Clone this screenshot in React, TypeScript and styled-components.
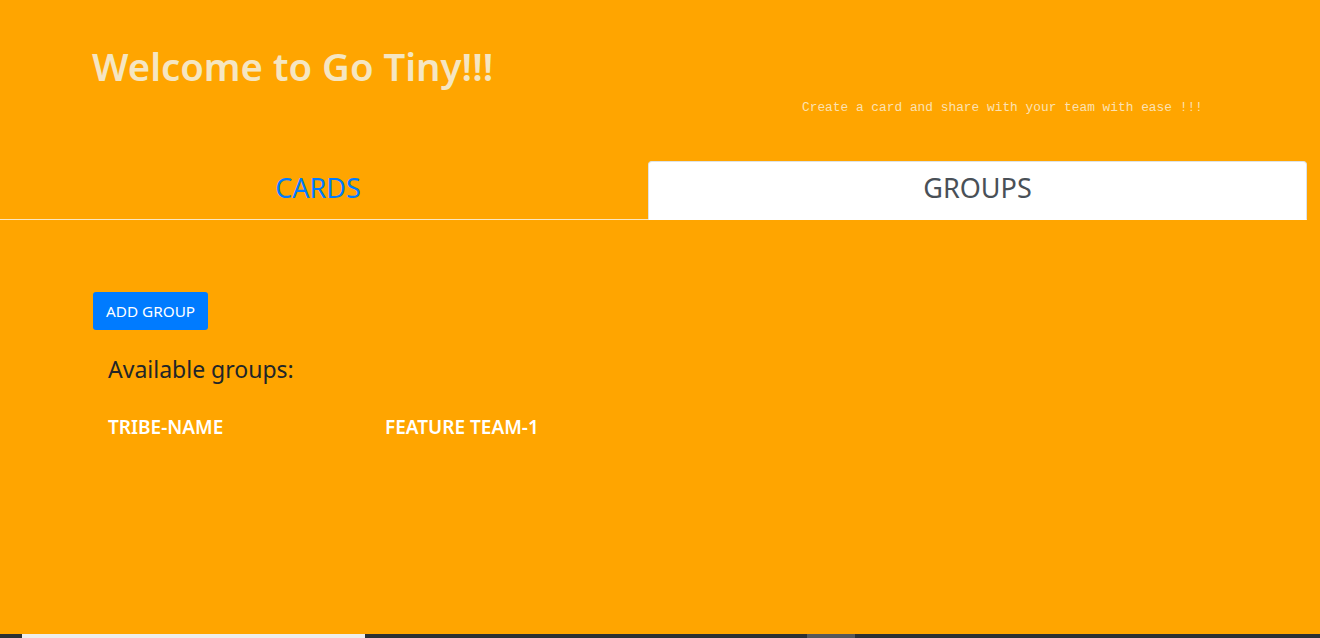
import * as React from 'react';
import styled, { createGlobalStyle } from 'styled-components';

const GlobalStyle = createGlobalStyle`
  html, body {
    margin: 0;
    padding: 0;
    background: #ffa500;
    font-family: 'Noto Sans', 'Open Sans', sans-serif;
  }
`;

const Page = styled.div`
  width: 1320px;
  height: 638px;
  display: flex;
  flex-direction: column;
  overflow: hidden;
`;

const Main = styled.div`
  flex: 1;
  background: #ffa500;
`;

const Header = styled.header`
  padding: 42px 0 0 92px;
  height: 119px;
  box-sizing: border-box;
`;

const Title = styled.h1`
  margin: 0;
  font-size: 38.3px;
  line-height: 48px;
  font-weight: 600;
  color: #f5e6c2;
`;

const Tagline = styled.div`
  margin: 9px 0 0 710px;
  font-family: 'Liberation Mono', 'DejaVu Sans Mono', monospace;
  font-size: 12.85px;
  line-height: 18px;
  color: #fbe2b4;
  white-space: nowrap;
`;

const Tabs = styled.nav`
  margin-top: 42px;
  width: 1307px;
  display: flex;
  border-bottom: 1px solid #fbe7c0;
`;

const Tab = styled.div<{ $active?: boolean }>`
  flex: 0 0 ${(p) => (p.$active ? '659px' : '636px')};
  margin-right: ${(p) => (p.$active ? '0' : '12px')};
  height: 59px;
  margin-bottom: -1px;
  padding-bottom: 6px;
  display: flex;
  align-items: center;
  justify-content: center;
  font-size: 27px;
  color: ${(p) => (p.$active ? '#495057' : '#007bff')};
  background: ${(p) => (p.$active ? '#ffffff' : 'transparent')};
  border: 1px solid ${(p) => (p.$active ? '#dee2e6' : 'transparent')};
  border-bottom-color: ${(p) => (p.$active ? '#ffffff' : 'transparent')};
  border-radius: 4px 4px 0 0;
  box-sizing: border-box;
`;

const Content = styled.section`
  padding: 72px 0 0 93px;
`;

const AddButton = styled.button`
  display: block;
  height: 38px;
  padding: 0 13px;
  border: none;
  border-radius: 3px;
  background: #007bff;
  color: #ffffff;
  font-family: inherit;
  font-size: 15.3px;
  cursor: pointer;
`;

const Heading = styled.h3`
  margin: 24px 0 0 15px;
  font-size: 23px;
  line-height: 30px;
  font-weight: 400;
  color: #212529;
`;

const GroupList = styled.div`
  display: flex;
  margin: 31px 0 0 15px;
`;

const Group = styled.div`
  width: 277px;
  font-size: 19px;
  line-height: 24px;
  font-weight: 600;
  color: #ffffff;
`;

const Strip = styled.div`
  height: 4px;
  display: flex;
  background: #2b3035;
`;

const StripPart = styled.div<{ $w: number; $c: string }>`
  flex: 0 0 ${(p) => p.$w}px;
  background: ${(p) => p.$c};
`;

const groups = ['TRIBE-NAME', 'FEATURE TEAM-1'];

export default function App() {
  return (
    <Page>
      <GlobalStyle />
      <Main>
        <Header>
          <Title>Welcome to Go Tiny!!!</Title>
          <Tagline>Create a card and share with your team with ease !!!</Tagline>
        </Header>
        <Tabs>
          <Tab>CARDS</Tab>
          <Tab $active>GROUPS</Tab>
        </Tabs>
        <Content>
          <AddButton>ADD GROUP</AddButton>
          <Heading>Available groups:</Heading>
          <GroupList>
            {groups.map((g) => (
              <Group key={g}>{g}</Group>
            ))}
          </GroupList>
        </Content>
      </Main>
      <Strip>
        <StripPart $w={22} $c="#2b3035" />
        <StripPart $w={343} $c="#eeeeee" />
        <StripPart $w={442} $c="#2b3035" />
        <StripPart $w={48} $c="#55585c" />
      </Strip>
    </Page>
  );
}
